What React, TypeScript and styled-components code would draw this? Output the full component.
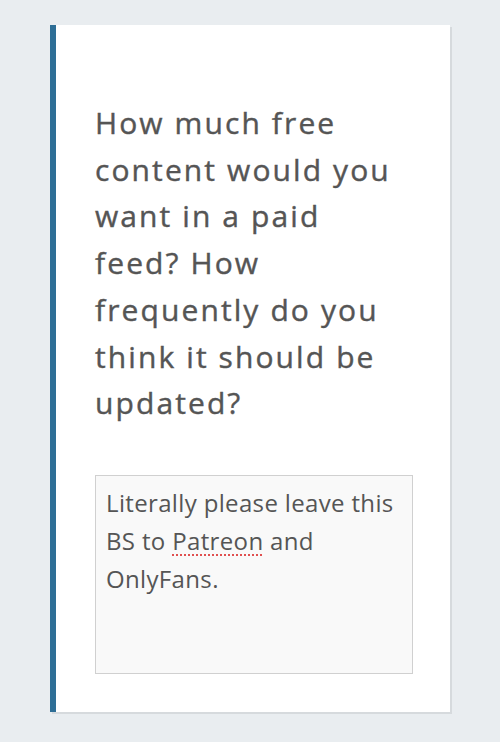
import React from "react";
import styled, { createGlobalStyle } from "styled-components";

const GlobalStyle = createGlobalStyle`
  html, body {
    margin: 0;
    padding: 0;
    background: #e9edf0;
  }
  body {
    font-family: "Open Sans", "Noto Sans", sans-serif;
  }
`;

const Page = styled.div`
  width: 500px;
  height: 742px;
  box-sizing: border-box;
  padding: 25px 0 0 50px;
`;

const Card = styled.section`
  width: 400px;
  height: 687px;
  box-sizing: border-box;
  background: #ffffff;
  border-left: 6px solid #2e6e96;
  box-shadow: 2px 2px 0 #d6dadd;
  padding: 75px 30px 0 39px;
  display: flex;
  flex-direction: column;
`;

const Question = styled.h2`
  margin: 0;
  max-width: 310px;
  font-family: "Open Sans", "Noto Sans", sans-serif;
  font-weight: 400;
  font-size: 30px;
  line-height: 46.7px;
  letter-spacing: 2.1px;
  color: #555555;
  -webkit-text-stroke: 0.4px #555555;
`;

const Answer = styled.div`
  margin-top: 48px;
  width: 318px;
  height: 199px;
  box-sizing: border-box;
  background: #f9f9f9;
  border: 1px solid #d0d0d0;
  padding: 8px 10px;
  font-family: "Open Sans", "Noto Sans", sans-serif;
  font-size: 24px;
  line-height: 38px;
  letter-spacing: 0.35px;
  color: #555555;
`;

const Misspelled = styled.span`
  text-decoration: underline dotted #e05050;
  text-decoration-thickness: 2px;
  text-underline-offset: 5px;
`;

export default function App() {
  return (
    <>
      <GlobalStyle />
      <Page>
        <Card>
          <Question>
            How much free content would you want in a paid feed? How frequently do you think it should be updated?
          </Question>
          <Answer role="textbox">
            Literally please leave this BS to <Misspelled>Patreon</Misspelled> and OnlyFans.
          </Answer>
        </Card>
      </Page>
    </>
  );
}
